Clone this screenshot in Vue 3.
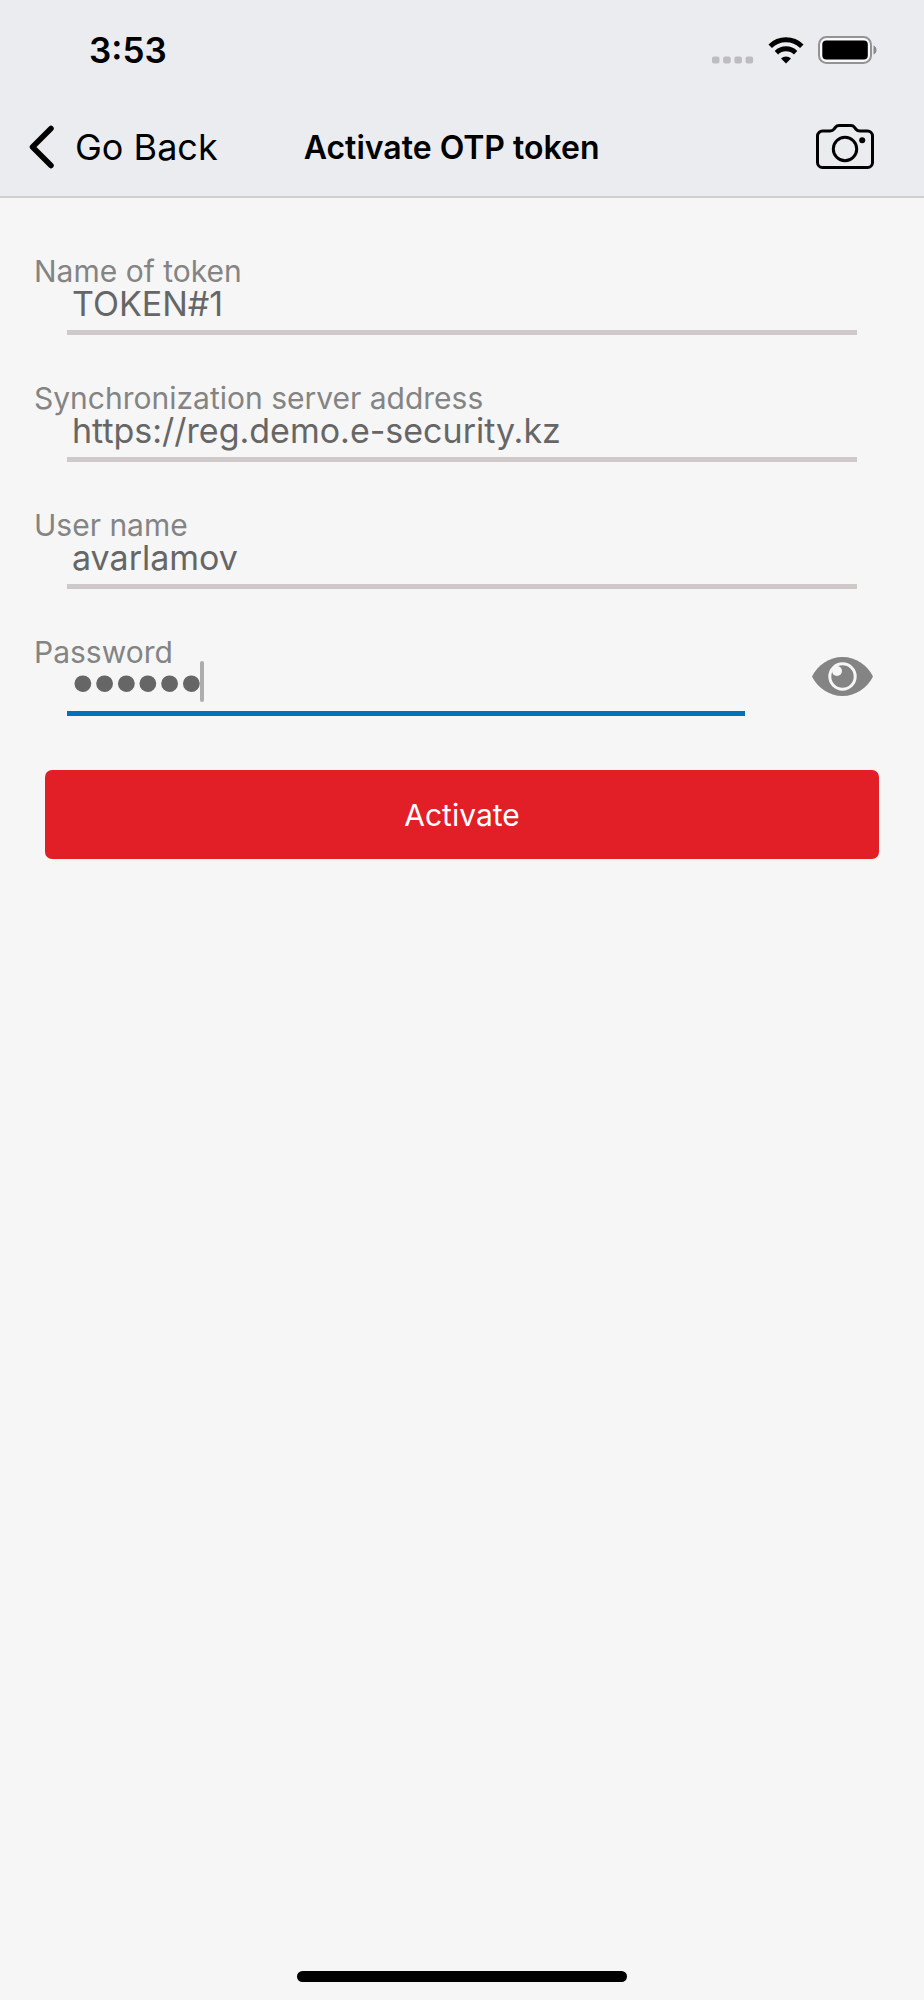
<script setup>
import { ref } from 'vue'

const fields = ref([
  { id: 'token-name', label: 'Name of token', type: 'text', value: 'TOKEN#1' },
  { id: 'server', label: 'Synchronization server address', type: 'url', value: 'https://reg.demo.e-security.kz' },
  { id: 'user', label: 'User name', type: 'text', value: 'avarlamov' },
])
const password = ref('secret')
const revealed = ref(false)
</script>

<template>
  <div class="screen">
    <header class="header">
      <div class="status">
        <time class="clock">3:53</time>
        <div class="indicators">
          <svg class="cell" viewBox="0 0 42 8" aria-hidden="true">
            <rect x="0" y="0.5" width="7.5" height="7" rx="2" />
            <rect x="11.2" y="0.5" width="7.5" height="7" rx="2" />
            <rect x="22.4" y="0.5" width="7.5" height="7" rx="2" />
            <rect x="33.6" y="0.5" width="7.5" height="7" rx="2" />
          </svg>
          <svg class="wifi" viewBox="0 0 36 27" aria-hidden="true">
            <path d="M2.2 9.2a22.6 22.6 0 0 1 31.6 0" fill="none" stroke="#000" stroke-width="5" />
            <path d="M8.4 15.7a13.7 13.7 0 0 1 19.2 0" fill="none" stroke="#000" stroke-width="4.8" />
            <path d="M18 26.4l-5-5a7.2 7.2 0 0 1 10 0z" />
          </svg>
          <svg class="battery" viewBox="0 0 60 28" aria-hidden="true">
            <rect x="1" y="1" width="52" height="26" rx="7.5" fill="#f8f8fa" stroke="#939396" stroke-width="2" />
            <rect x="4.300" y="4.5" width="45.5" height="19" rx="4" />
            <path d="M55.5 9.5c4 1.5 4 7.5 0 9z" fill="#8a8a8d" />
          </svg>
        </div>
      </div>
      <nav class="nav">
        <button class="back" type="button">
          <svg viewBox="0 0 26 44" aria-hidden="true">
            <path d="M22 3.500 3.500 22 22 40.500" fill="none" stroke="#000" stroke-width="5.500" stroke-linecap="round" stroke-linejoin="round" />
          </svg>
          <span>Go Back</span>
        </button>
        <h1 class="title">Activate OTP token</h1>
        <button class="camera" type="button" aria-label="Scan code">
          <svg viewBox="0 0 58 46" aria-hidden="true">
            <g fill="none" stroke="#000" stroke-width="3">
              <path d="M6.500 7H14c2 0 3-.5 4-1.800l1.500-1.900C20.500 2 21.500 1.500 23 1.500h12c1.500 0 2.500.5 3.500 1.800L40 5.200C41 6.500 42 7 44 7h7.500a5 5 0 0 1 5 5v26.500a5 5 0 0 1-5 5h-45a5 5 0 0 1-5-5V12a5 5 0 0 1 5-5z" />
              <circle cx="29" cy="25" r="11.700" />
            </g>
            <circle cx="46.200" cy="16.200" r="3" />
          </svg>
        </button>
      </nav>
    </header>

    <main class="main">
      <form @submit.prevent>
        <div v-for="f in fields" :key="f.id" class="field">
          <label :for="f.id">{{ f.label }}</label>
          <input :id="f.id" v-model="f.value" :type="f.type" />
        </div>
        <div class="secret-row">
          <div class="field secret">
            <label for="password">Password</label>
            <input id="password" v-model="password" :class="{ masked: !revealed }" :type="revealed ? 'text' : 'password'" />
            <span v-if="!revealed" class="caret"></span>
          </div>
          <button class="eye" type="button" aria-label="Show password" @click="revealed = !revealed">
            <svg viewBox="0 0 61 39" aria-hidden="true">
              <path d="M0 19.500C6 8 17 0 30.500 0S55 8 61 19.500C55 31 44 39 30.500 39S6 31 0 19.500z" fill="#848484" />
              <circle cx="30.500" cy="19.500" r="12.700" fill="none" stroke="#f6f6f6" stroke-width="3" />
              <circle cx="25" cy="14" r="5" fill="#f6f6f6" />
            </svg>
          </button>
        </div>
        <button class="submit" type="submit">Activate</button>
      </form>
    </main>

    <div class="home"></div>
  </div>
</template>

<style>
body {
  background: #f6f6f6;
}
</style>

<style scoped>
.screen {
  min-height: 100vh;
  display: flex;
  flex-direction: column;
  background: #f6f6f6;
  color: #000;
  font-family: Inter, "Liberation Sans", sans-serif;
}

button {
  padding: 0;
  border: 0;
  background: none;
  color: inherit;
  font: inherit;
  cursor: pointer;
}

svg {
  display: block;
}

.header {
  background: #ebecf0;
  border-bottom: 2px solid #cfcfd2;
}

.status {
  height: 100px;
  padding: 0 46px 0 89px;
  display: flex;
  align-items: center;
  justify-content: space-between;
}

.clock {
  font-size: 35px;
  font-weight: 600;
}

.indicators {
  display: flex;
  align-items: flex-end;
}

.cell {
  width: 42px;
  height: 8px;
  fill: #bdbdc0;
}

.wifi {
  width: 36px;
  height: 27px;
  margin: 0 14px;
}

.battery {
  width: 60px;
  height: 28px;
}

.nav {
  height: 96px;
  padding: 0 50px 2px 29px;
  box-sizing: border-box;
  display: flex;
  align-items: center;
}

.back {
  display: flex;
  align-items: center;
  gap: 20px;
  font-size: 36px;
}

.back svg {
  width: 26px;
  height: 44px;
}

.title {
  margin: 0 auto 0 86px;
  font-size: 32px;
  font-weight: 600;
}

.camera svg {
  width: 58px;
  height: 46px;
}

.main {
  flex: 1;
  padding: 57px 34px 0;
}

.field {
  display: flex;
  flex-direction: column;
  margin-bottom: 47px;
}

.field label {
  font-size: 30px;
  line-height: 32px;
  color: #848484;
}

.field input {
  min-width: 0;
  margin: 0 33px;
  padding: 0 5px 11px;
  height: 48px;
  box-sizing: border-box;
  border: 0;
  border-bottom: 5px solid #cfc9ca;
  border-radius: 0;
  outline: 0;
  background: none;
  color: #666;
  font-family: inherit;
  font-size: 34px;
}

.secret-row {
  display: flex;
  align-items: flex-start;
  margin-bottom: 54px;
}

.secret {
  position: relative;
  flex: 1;
  min-width: 0;
  margin-bottom: 0;
}

.field.secret input {
  border-color: #0072b8;
}

.field input.masked {
  padding-bottom: 15px;
  font-family: "Liberation Sans", sans-serif;
  font-size: 62px;
}

.caret {
  position: absolute;
  left: 166px;
  top: 25px;
  width: 4px;
  height: 41px;
  border-radius: 2px;
  background: #adadad;
}

.eye {
  flex: none;
  margin: 21px 17px 0 34px;
}

.eye svg {
  width: 61px;
  height: 39px;
}

.submit {
  display: block;
  width: calc(100% - 22px);
  height: 89px;
  margin: 0 11px;
  border-radius: 7px;
  background: #e21f26;
  color: #fff;
  font-size: 30px;
}

.home {
  width: 330px;
  height: 11px;
  margin: 0 auto 18px;
  border-radius: 6px;
  background: #000;
}
</style>
